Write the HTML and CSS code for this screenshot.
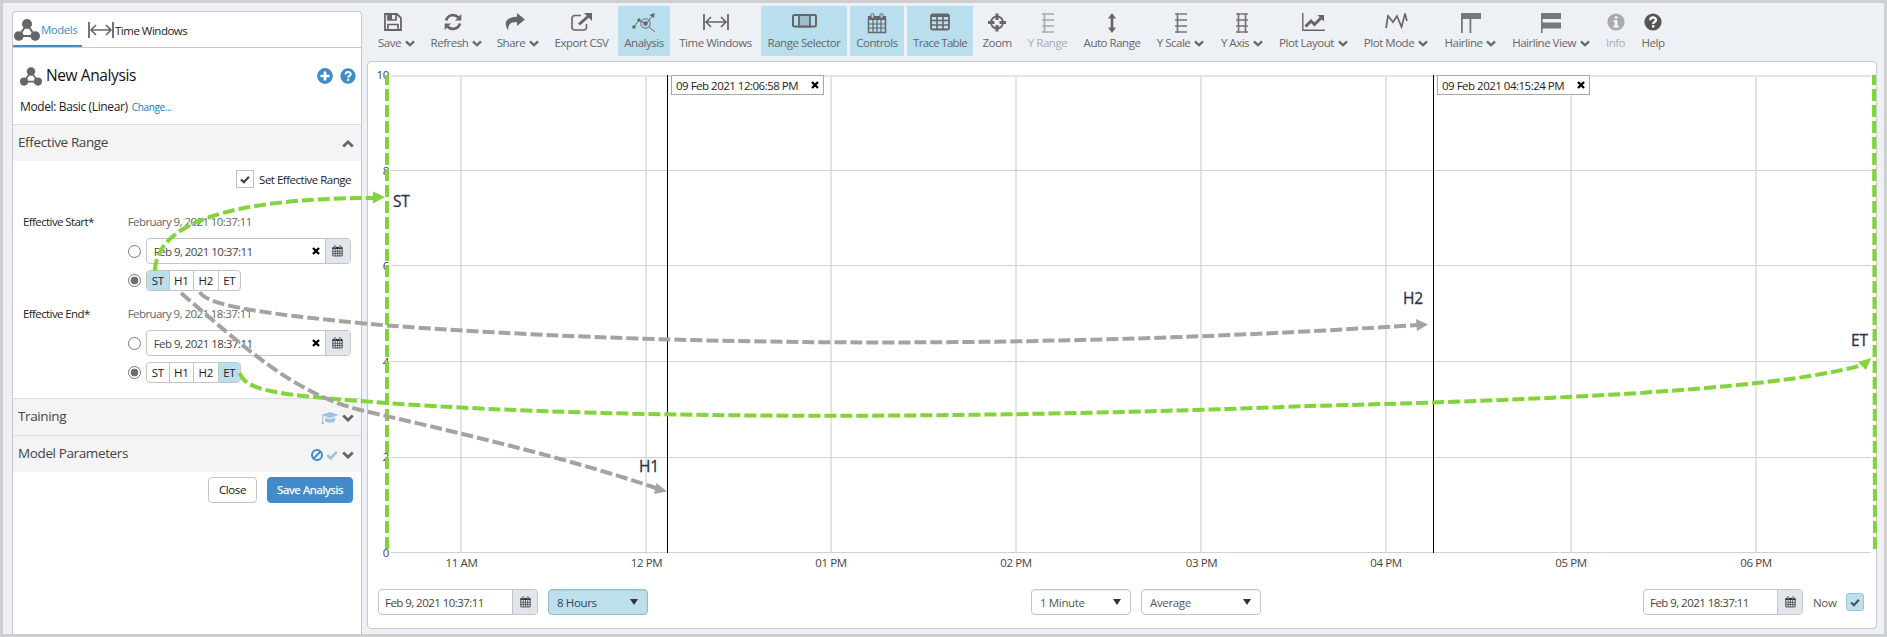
FILE: index.html
```html
<!DOCTYPE html>
<html lang="en">
<head>
<meta charset="utf-8">
<title>New Analysis</title>
<link rel="stylesheet" href="styles.css">
</head>
<body>
<svg class="defs" width="0" height="0">
  <symbol id="model" viewBox="0 0 26 22"><g stroke="#666" stroke-width="2" fill="none"><path d="M13 5 5 17M13 5l8 12M5 17h16"/></g><g fill="#666"><circle cx="13" cy="5" r="5"/><circle cx="4.8" cy="17" r="4.8"/><circle cx="21.2" cy="17" r="4.8"/></g></symbol>
  <symbol id="span" viewBox="0 0 26 18"><path d="M1 1v16M25 1v16" stroke="#666" stroke-width="1.8"/><path d="M3 9h20M8 4 3 9l5 5M18 4l5 5-5 5" fill="none" stroke="#666" stroke-width="1.6"/></symbol>
  <symbol id="chev" viewBox="0 0 12 8"><path d="M1.2 1.5 6 6.1l4.800-4.600" fill="none" stroke="#666" stroke-width="2.800"/></symbol>
  <symbol id="cal" viewBox="0 0 20 21"><path d="M1.500 5v14.500h17V5z" fill="none" stroke="currentColor" stroke-width="1.500"/><path d="M1 3h18v4H1z" fill="currentColor"/><path d="M1 11h18M1 15h18M6 7v12M10 7v12M14 7v12" stroke="currentColor" stroke-width="1.200"/><rect x="4" y=".7" width="3" height="4.600" rx="1.200" fill="#ccd" stroke="currentColor"/><rect x="13" y=".7" width="3" height="4.600" rx="1.200" fill="#ccd" stroke="currentColor"/></symbol>
  <symbol id="x" viewBox="0 0 8 8"><path d="M1 1l6 6M7 1 1 7" stroke="#000" stroke-width="2.300"/></symbol>
  <symbol id="check" viewBox="0 0 12 10"><path d="M1.300 5 4.700 8.200 10.700 1.800" fill="none" stroke="currentColor" stroke-width="2.700"/></symbol>
  <symbol id="help" viewBox="0 0 18 18"><circle cx="9" cy="9" r="8.600" fill="currentColor"/><path d="M6.300 7.200C6.300 3.500 12 3.700 12 6.900 12 8.900 9.200 8.800 9.200 10.900" fill="none" stroke="#fff" stroke-width="2.300"/><path d="M8 12.200h2.400v2.300H8z" fill="#fff"/></symbol>
</svg>

<div class="app">
  <aside class="sidebar">
    <nav class="tabs">
      <a class="tab tab-active"><svg width="26" height="22"><use href="#model"/></svg><span>Models</span></a>
      <a class="tab tab-time"><svg width="26" height="18"><use href="#span"/></svg><span>Time Windows</span></a>
    </nav>
    <header class="head">
      <div class="title-row">
        <svg width="22" height="19"><use href="#model"/></svg>
        <h1>New Analysis</h1>
        <svg class="blue" width="16" height="16" viewBox="0 0 16 16"><circle cx="8" cy="8" r="7.900" fill="currentColor"/><path d="M8 3.500v9M3.500 8h9" stroke="#fff" stroke-width="2.700"/></svg>
        <svg class="blue help-icon" width="16" height="16"><use href="#help"/></svg>
      </div>
      <div class="model-row"><span>Model: Basic (Linear)</span><a>Change...</a></div>
    </header>
    <section>
      <h2 class="bar"><span>Effective Range</span><svg class="up" width="12" height="8"><use href="#chev"/></svg></h2>
      <div class="range">
        <label class="set-range"><i class="box"><svg width="10" height="9"><use href="#check"/></svg></i><span>Set Effective Range</span></label>
        <div class="field">
          <span class="name">Effective Start*</span>
          <div class="stack">
            <span class="stamp">February 9, 2021 10:37:11</span>
            <div class="pick"><i class="radio"></i><div class="input"><span>Feb 9, 2021 10:37:11</span><svg width="8" height="8"><use href="#x"/></svg><b class="addon"><svg width="11" height="12"><use href="#cal"/></svg></b></div></div>
            <div class="pick"><i class="radio radio-on"></i><div class="seg"><span class="on">ST</span><span>H1</span><span>H2</span><span>ET</span></div></div>
          </div>
        </div>
        <div class="field">
          <span class="name">Effective End*</span>
          <div class="stack">
            <span class="stamp">February 9, 2021 18:37:11</span>
            <div class="pick"><i class="radio"></i><div class="input"><span>Feb 9, 2021 18:37:11</span><svg width="8" height="8"><use href="#x"/></svg><b class="addon"><svg width="11" height="12"><use href="#cal"/></svg></b></div></div>
            <div class="pick"><i class="radio radio-on"></i><div class="seg"><span>ST</span><span>H1</span><span>H2</span><span class="on">ET</span></div></div>
          </div>
        </div>
      </div>
    </section>
    <h2 class="bar"><span>Training</span>
      <svg class="cap" width="18" height="12" viewBox="0 0 18 12"><g fill="#9dc3e3"><path d="M9 0 18 3 9 6 0 3z"/><path d="M4 5.500 9 7.200 14 5.500V9c-2 2-8 2-10 0z"/><path d="M1.200 3.500h1v5l.8 3.500H.5l.7-3.500z"/></g></svg>
      <svg width="12" height="8"><use href="#chev"/></svg></h2>
    <h2 class="bar"><span>Model Parameters</span>
      <svg class="ban" width="12" height="12" viewBox="0 0 12 12"><circle cx="6" cy="6" r="5" fill="none" stroke="#428bca" stroke-width="2"/><path d="M2.500 9.500l7-7" stroke="#428bca" stroke-width="1.800"/></svg>
      <svg class="pale" width="12" height="10"><use href="#check"/></svg>
      <svg width="12" height="8"><use href="#chev"/></svg></h2>
    <div class="actions"><button class="btn">Close</button><button class="btn btn-primary">Save Analysis</button></div>
  </aside>

  <main class="main">
    <div class="toolbar">
      <div class="tool w51 early"><svg width="18" height="18" viewBox="0 0 18 18"><path d="M1 1h12l4 4v12H1z" fill="none" stroke="#666" stroke-width="1.800"/><path d="M4 1v6h8V1M4 17v-5.500h10V17" fill="none" stroke="#666" stroke-width="1.700"/><path d="M4 1h4v6H4z" fill="#666"/></svg><p>Save<svg width="10" height="7"><use href="#chev"/></svg></p></div>
      <div class="tool w63 early"><svg width="18" height="18" viewBox="0 0 18 18"><path d="M2 7.500C4 1.200 11 .8 14.500 4.500M16 10.500c-2 6.300-9 6.700-12.500 3" fill="none" stroke="#666" stroke-width="2.600"/><path d="M17.300 1v6.500H11zM.7 17v-6.500H7z" fill="#666"/></svg><p>Refresh<svg width="10" height="7"><use href="#chev"/></svg></p></div>
      <div class="tool w54 early"><svg width="20" height="18" viewBox="0 0 20 18"><path d="M12 0l8 6.500-8 6.500V9.200C6 9 3 10.500 3.200 17.500-2 10 1 3.700 12 3.700z" fill="#666"/></svg><p>Share<svg width="10" height="7"><use href="#chev"/></svg></p></div>
      <div class="tool w67"><svg width="21" height="18" viewBox="0 0 21 18"><path d="M10 2.500H4Q1 2.500 1 5.500v8.500q0 3 3 3h8.500q3 0 3-3V11" fill="none" stroke="#666" stroke-width="1.600"/><path d="M8 11.500 17 3.500" stroke="#666" stroke-width="3"/><path d="M13 0h8v8z" fill="#666"/></svg><p>Export CSV</p></div>
      <div class="tool w52 active"><svg width="24" height="20" viewBox="0 0 24 20"><g fill="none" stroke="#666"><path d="M2 14 7 7l7 4 7-9M17 14l6 5"/><circle cx="13.500" cy="10.500" r="4.700"/></g><circle cx="2" cy="14" r="1.800" fill="#666"/><circle cx="7" cy="7" r="1.700" fill="#666"/><circle cx="13.500" cy="10.500" r="2.200" fill="#666"/><path d="M17.500 2 22.500 0l-.5 5z" fill="#666"/></svg><p>Analysis</p></div>
      <div class="tool w85"><svg width="26" height="18"><use href="#span"/></svg><p>Time Windows</p></div>
      <div class="tool w86 active"><svg width="25" height="18" viewBox="0 0 25 18"><rect x="1" y="2" width="23" height="11.500" rx="1.500" fill="none" stroke="#666" stroke-width="2"/><path d="M7 2h11v11.500H7z" fill="#9dbdca" stroke="#666" stroke-width="1.800"/></svg><p>Range Selector</p></div>
      <div class="tool w54 active"><svg width="20" height="21"><use href="#cal"/></svg><p>Controls</p></div>
      <div class="tool w66 active"><svg width="20" height="18" viewBox="0 0 20 18"><path d="M1 3h18M1 7.500h18M1 12h18M7 3v13M13 3v13" stroke="#666" stroke-width="1.600"/><rect x="1" y="1.500" width="18" height="15" rx="1.500" fill="none" stroke="#666" stroke-width="1.800"/><path d="M1 1h18v3H1z" fill="#666"/></svg><p class="tight">Trace Table</p></div>
      <div class="tool w42"><svg width="18" height="19" viewBox="0 0 18 19"><circle cx="9" cy="9.500" r="6" fill="none" stroke="#666" stroke-width="1.800"/><path d="M9 .5v6.500M9 12v6.500M0 9.500h6.500M11.500 9.500H18" stroke="#666" stroke-width="3"/></svg><p>Zoom</p></div>
      <div class="tool w53 disabled"><svg width="12" height="20" viewBox="0 0 12 20"><path d="M2.500 0v20M0 1h12M0 7h12M0 13h12M0 19h12" stroke="#666" stroke-width="1.700"/></svg><p>Y Range</p></div>
      <div class="tool w70"><svg width="8" height="20" viewBox="0 0 8 20"><path d="M4 3v14" stroke="#666" stroke-width="2.600"/><path d="M0 5.500 4 0l4 5.500zM0 14.500 4 20l4-5.500z" fill="#666"/></svg><p>Auto Range</p></div>
      <div class="tool w61"><svg width="12" height="20" viewBox="0 0 12 20"><path d="M2.500 0v20M0 1h12M0 7h12M0 13h12M0 19h12" stroke="#777" stroke-width="1.700"/></svg><p>Y Scale<svg width="10" height="7"><use href="#chev"/></svg></p></div>
      <div class="tool w56"><svg width="12" height="20" viewBox="0 0 12 20"><path d="M2.500 0v20M9.500 0v20M0 1h12M0 7h12M0 13h12M0 19h12" stroke="#777" stroke-width="1.700"/></svg><p>Y Axis<svg width="10" height="7"><use href="#chev"/></svg></p></div>
      <div class="tool w81"><svg width="23" height="18" viewBox="0 0 23 18"><path d="M.8 0v17.200H23" fill="none" stroke="#666" stroke-width="1.400"/><path d="M3.500 13.500 9 8l3.500 3.500L19 5" fill="none" stroke="#666" stroke-width="3"/><path d="M15.500 2H22v6.500z" fill="#666"/></svg><p>Plot Layout<svg width="10" height="7"><use href="#chev"/></svg></p></div>
      <div class="tool w78"><svg class="lift" width="23" height="16" viewBox="0 0 23 16"><path d="M1 15 3 3l5 6 4-6 4.500 11L20 1l2 7" fill="none" stroke="#666" stroke-width="1.700"/></svg><p>Plot Mode<svg width="10" height="7"><use href="#chev"/></svg></p></div>
      <div class="tool w65"><svg width="20" height="20" viewBox="0 0 20 20"><path d="M0 0h20v6H0zM0 0h1.800v20H0zM8.500 0h1.800v20H8.500z" fill="#777"/></svg><p>Hairline<svg width="10" height="7"><use href="#chev"/></svg></p></div>
      <div class="tool w90"><svg width="20" height="20" viewBox="0 0 20 20"><path d="M0 0h20v6H0zM0 9.500h20v6H0zM0 0h1.600v20H0z" fill="#777"/></svg><p>Hairline View<svg width="10" height="7"><use href="#chev"/></svg></p></div>
      <div class="tool w33 disabled"><svg width="18" height="18" viewBox="0 0 18 18"><circle cx="9" cy="9" r="8.600" fill="#666"/><path d="M7.800 3.300h2.500v2.400H7.800zM6.500 7.300h3.900v5.200h1.300v2H6.500v-2h1.300V9.300H6.500z" fill="#fff"/></svg><p>Info</p></div>
      <div class="tool w36"><svg class="dark" width="18" height="18"><use href="#help"/></svg><p>Help</p></div>
    </div>

    <div class="panel">
      <svg class="plot" width="1508" height="518" viewBox="368 62 1508 518">
        <path d="M461 75v478M646 75v478M831 75v478M1016 75v478M1201 75v478M1386 75v478M1571 75v478M1756 75v478M391 76h1480" stroke="#e4e4e4" stroke-width="2"/>
        <path d="M391 170.500h1480M391 265.500h1480M391 361.500h1480M391 457.500h1480M391 552.500h1480" stroke="#d0d0d0"/>
        <path d="M667.500 75v478M1433.500 75v478" stroke="#000" shape-rendering="crispEdges"/>
        <g class="axis" text-anchor="end"><text x="389" y="79">10</text><text x="389" y="175">8</text><text x="389" y="270">6</text><text x="389" y="366">4</text><text x="389" y="461">2</text><text x="389" y="557">0</text></g>
        <g class="axis" text-anchor="middle"><text x="461.500" y="567">11 AM</text><text x="646.500" y="567">12 PM</text><text x="831" y="567">01 PM</text><text x="1016" y="567">02 PM</text><text x="1201.500" y="567">03 PM</text><text x="1386" y="567">04 PM</text><text x="1571" y="567">05 PM</text><text x="1756" y="567">06 PM</text></g>
      </svg>
      <div class="flag flag-1"><span>09 Feb 2021 12:06:58 PM</span><svg width="8" height="8"><use href="#x"/></svg></div>
      <div class="flag flag-2"><span>09 Feb 2021 04:15:24 PM</span><svg width="8" height="8"><use href="#x"/></svg></div>
      <div class="controls">
        <div class="input date"><span>Feb 9, 2021 10:37:11</span><b class="addon"><svg width="11" height="12"><use href="#cal"/></svg></b></div>
        <div class="select tinted"><span>8 Hours</span><i></i></div>
        <div class="middle">
          <div class="select"><span>1 Minute</span><i></i></div>
          <div class="select wide"><span>Average</span><i></i></div>
        </div>
        <div class="input date"><span>Feb 9, 2021 18:37:11</span><b class="addon"><svg width="11" height="12"><use href="#cal"/></svg></b></div>
        <span class="now">Now</span>
        <i class="box box-on"><svg width="10" height="9"><use href="#check"/></svg></i>
      </div>
    </div>
  </main>

  <svg class="notes" width="1887" height="637" viewBox="0 0 1887 637">
    <g fill="none" stroke="#82d43a" stroke-width="4" stroke-dasharray="12 4">
      <path d="M387 75V549" stroke-dashoffset="2"/>
      <path d="M1874 75 1875 549" stroke-dashoffset="2"/>
      <path d="M155 271C156 225 225 198 374 198"/>
      <path d="M240 373C245 394 300 396 387 403C640 421 1000 418 1310 406C1510 401 1770 392 1862 365"/>
    </g>
    <g fill="none" stroke="#a3a3a3" stroke-width="4" stroke-dasharray="12 4">
      <path d="M200 292C206 306 270 315 387 325.500C640 344 1000 352 1417 325"/>
      <path d="M181 293C240 343 290 392 360 410C460 433 560 456 656 488"/>
    </g>
    <path d="M373 191.500 385 197 373 203.500zM1871 358 1858 362 1866 370z" fill="#82d43a"/>
    <path d="M1416 319 1428 324.500 1417 331zM656.500 483 667 491.500 654 494z" fill="#a3a3a3"/>
    <g class="mark"><text x="393" y="207">ST</text><text x="1403" y="304">H2</text><text x="639" y="472">H1</text><text x="1851" y="346">ET</text></g>
  </svg>
</div>
</body>
</html>
```
FILE: styles.css
```css
* { box-sizing: border-box; }
body { margin: 0; font-family: "Open Sans", "Noto Sans", sans-serif; font-size: 11.5px; letter-spacing: -0.5px; color: #222; }
p, h1, h2 { margin: 0; font-weight: 400; }
svg { display: block; flex: none; }
i { font-style: normal; }
.defs { position: absolute; }
.app { position: relative; display: flex; width: 1887px; height: 637px; border: 3px solid #cfcfcf; background: #edf1f6; overflow: hidden; }
.blue { color: #428bca; }
.dark { color: #555; }
.pale { color: #9dc3e3; }

.sidebar { width: 350px; margin: 8px 0 0 9px; border: 1px solid #c8c8c8; border-bottom: 0; border-radius: 4px 4px 0 0; background: #fff; flex: none; }
.tabs { display: flex; height: 36px; border-bottom: 1px solid #c8c8c8; }
.tab { display: flex; align-items: center; height: 35px; gap: 1px; padding-top: 1px; white-space: nowrap; }
.tab-active { width: 69px; padding: 2px 0 0 1px; border-bottom: 2px solid #428bca; color: #428bca; }
.tab-time { margin-left: 6px; }
.tab-time span { margin-top: 1px; }
.head { height: 76px; padding: 18px 5px 0 7px; }
.title-row { display: flex; align-items: center; height: 20px; }
.title-row h1 { flex: 1; margin: -2px 0 0 4px; font-size: 15.5px; line-height: 20px; letter-spacing: -0.4px; color: #111; }
.title-row .blue { margin-top: -1px; }
.title-row .help-icon { margin-left: 7px; }
.model-row { display: flex; align-items: baseline; gap: 4px; margin-top: 12px; font-size: 12px; line-height: 18px; letter-spacing: -0.37px; }
.model-row a { font-size: 10px; letter-spacing: -0.35px; color: #1b75bb; }
.bar { display: flex; align-items: center; height: 37px; padding: 0 7px 0 5px; border-top: 1px solid #dcdcdc; background: #f4f4f4; color: #444; font-size: 13.5px; letter-spacing: -0.38px; }
.bar span { flex: 1; margin-top: -2px; }
.bar svg { margin-top: 2px; }
.up { transform: rotate(180deg); }
.cap { margin-right: 3px; }
.pale { margin-right: 4px; }
.ban { margin-right: 3px; }

.range { height: 237px; padding: 9px 10px 0; }
.set-range { display: flex; justify-content: flex-end; align-items: center; gap: 5px; height: 18px; }
.box { display: flex; align-items: center; justify-content: center; width: 18px; height: 18px; border: 1px solid #c0c0c0; color: #444; }
.box-on { border-color: #9fc3d1; border-radius: 3px; background: #bee0ec; color: #456; }
.field { display: flex; height: 92px; }
.set-range + .field { margin-top: 26px; }
.name { width: 105px; line-height: 16px; letter-spacing: -0.6px; }
.stack { width: 224px; }
.stamp { display: block; line-height: 16px; margin-bottom: 8px; color: #666; letter-spacing: -0.57px; }
.pick { display: flex; align-items: center; gap: 5px; margin-bottom: 6px; }
.radio { width: 13px; height: 13px; border: 1px solid #777; border-radius: 50%; background: #fff; }
.radio-on { background: radial-gradient(circle, #707070 3.6px, #fff 4.2px); }
.input { display: flex; align-items: center; width: 205px; height: 26px; padding-left: 7px; border: 1px solid #c4c4c4; border-radius: 4px; background: #fff; overflow: hidden; color: #444; letter-spacing: -0.55px; }
.input > span { flex: 1; white-space: nowrap; }
.addon { display: flex; align-items: center; justify-content: center; width: 25px; height: 24px; margin-left: 5px; border-left: 1px solid #c4c4c4; background: #e1e5ec; color: #333; }
.seg { display: flex; height: 21px; border: 1px solid #c4c4c4; border-radius: 4px; overflow: hidden; line-height: 20px; text-align: center; letter-spacing: -0.3px; color: #222; }
.seg span { width: 24px; border-left: 1px solid #c4c4c4; }
.seg span:first-child { width: 22px; border-left: 0; }
.seg .on { background: #b9dfee; }
.seg span:nth-child(3) { width: 25px; }
.seg span:last-child { width: 22px; }
.actions { display: flex; justify-content: flex-end; gap: 10px; padding: 5px 8px 0; }
.btn { width: 49px; height: 26px; padding: 0 0 1px; border: 1px solid #c4c4c4; border-radius: 4px; background: #fff; font: inherit; letter-spacing: -0.4px; color: #111; }
.btn-primary { width: 86px; border-color: #428bca; background: #428bca; color: #fff; -webkit-text-stroke: 0.25px #fff; }

.main { width: 1516px; margin: 3px 0 0 5px; flex: none; }
.toolbar { display: flex; gap: 3px; height: 55px; padding-left: 4px; color: #666; letter-spacing: -0.48px; }
.tool { display: flex; flex-direction: column; align-items: center; justify-content: space-between; height: 50px; padding: 7px 0 5px; white-space: nowrap; flex: none; }
.early > svg { margin-right: 7px; }
.tool p { display: flex; align-items: center; gap: 4px; line-height: 17px; }
.tool p svg { margin-top: 2px; }
.tool .tight { letter-spacing: -0.7px; }
.tool .lift { margin-bottom: 4px; }
.active { background: #b9dfee; }
.disabled { opacity: .5; }
.w33 { width: 33px; } .w36 { width: 36px; } .w42 { width: 42px; } .w51 { width: 51px; }
.w52 { width: 52px; } .w53 { width: 53px; } .w54 { width: 54px; } .w56 { width: 56px; }
.w61 { width: 61px; } .w63 { width: 63px; } .w65 { width: 65px; } .w66 { width: 66px; }
.w67 { width: 67px; } .w70 { width: 70px; } .w78 { width: 78px; } .w81 { width: 81px; }
.w85 { width: 85px; } .w86 { width: 86px; } .w90 { width: 90px; }

.panel { position: relative; width: 1510px; height: 568px; border: 1px solid #c8c8c8; border-radius: 4px; background: #fff; }
.axis { font-size: 11.5px; fill: #444; letter-spacing: -0.35px; }
.flag { position: absolute; top: 13px; display: flex; align-items: center; justify-content: space-between; width: 153px; height: 20px; padding: 0 4px; border: 1px solid #a8a8a8; background: #fff; white-space: nowrap; letter-spacing: -0.5px; }
.flag-1 { left: 303px; }
.flag-2 { left: 1069px; }
.controls { display: flex; align-items: center; height: 26px; margin-top: 9px; padding: 0 12px 0 10px; color: #555; }
.date { width: 160px; padding-left: 6px; flex: none; }
.select { display: flex; align-items: center; justify-content: space-between; width: 100px; height: 26px; padding: 0 9px 0 8px; border: 1px solid #c4c4c4; border-radius: 4px; box-shadow: inset 0 1px 1px rgba(0,0,0,.08); letter-spacing: -0.35px; }
.select i { width: 0; height: 0; border: 4px solid transparent; border-top: 6px solid #333; border-bottom: 0; }
.tinted { margin-left: 10px; border-color: #92bcc9; background: #bee0ec; color: #345; }
.wide { width: 120px; }
.middle { flex: 1; display: flex; gap: 10px; padding-left: 383px; }
.now { width: 33px; margin-left: 10px; letter-spacing: -0.35px; }

.notes { position: absolute; left: -3px; top: -3px; pointer-events: none; }
.mark { font-size: 15.5px; letter-spacing: -0.2px; fill: #2b3349; stroke: #2b3349; stroke-width: .3px; }
```
